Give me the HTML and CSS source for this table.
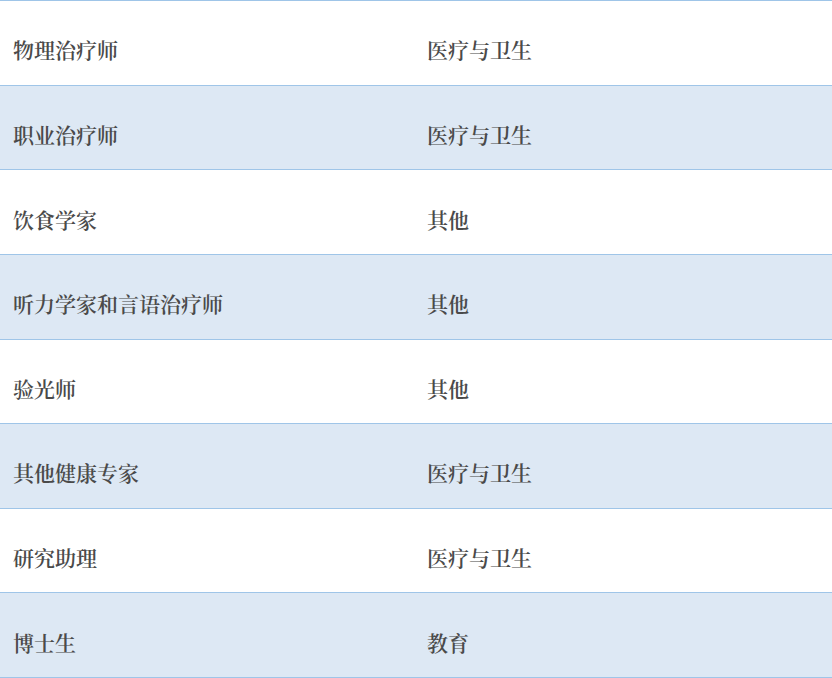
FILE: index.html
```html
<!DOCTYPE html>
<html lang="zh-CN">
<head>
<meta charset="utf-8">
<link rel="stylesheet" href="styles.css">
</head>
<body>
<div class="table">
  <div class="row"><div class="cell name">物理治疗师</div><div class="cell cat">医疗与卫生</div></div>
  <div class="row alt"><div class="cell name">职业治疗师</div><div class="cell cat">医疗与卫生</div></div>
  <div class="row"><div class="cell name">饮食学家</div><div class="cell cat">其他</div></div>
  <div class="row alt"><div class="cell name">听力学家和言语治疗师</div><div class="cell cat">其他</div></div>
  <div class="row"><div class="cell name">验光师</div><div class="cell cat">其他</div></div>
  <div class="row alt"><div class="cell name">其他健康专家</div><div class="cell cat">医疗与卫生</div></div>
  <div class="row"><div class="cell name">研究助理</div><div class="cell cat">医疗与卫生</div></div>
  <div class="row alt"><div class="cell name">博士生</div><div class="cell cat">教育</div></div>
</div>
</body>
</html>
```
FILE: styles.css
```css
html, body {
  margin: 0;
  padding: 0;
  background: #ffffff;
}
body {
  font-family: "Noto Serif CJK SC", "Noto Sans CJK SC", serif;
  color: #4a4a4a;
}
.table {
  width: 832px;
  border-bottom: 1px solid #9fc5e8;
}
.row {
  box-sizing: border-box;
  height: 84.625px;
  border-top: 1px solid #9fc5e8;
  display: grid;
  grid-template-columns: 414px 1fr;
  align-items: center;
  padding-top: 14px;
}
.row.alt {
  background: #dde8f4;
}
.cell {
  font-size: 21px;
  line-height: 21px;
  font-weight: 600;
  padding-left: 13px;
  white-space: nowrap;
}
```
